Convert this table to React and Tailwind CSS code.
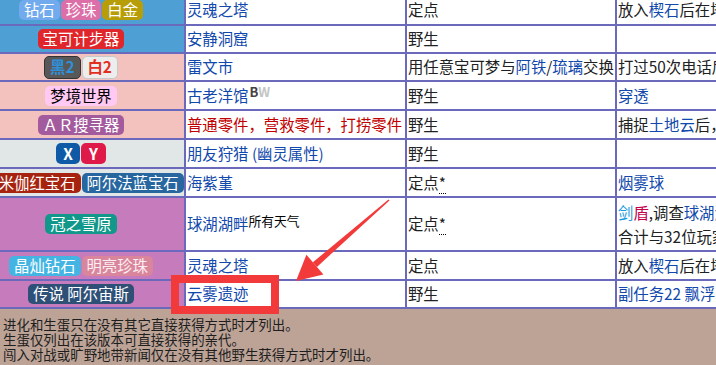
import React from 'react';

const link = 'text-[#1048ac]';

const Badge = ({ bg, text = 'text-white', className = '', children }) => (
  <span className={`inline-flex h-[20px] items-center rounded-[5px] px-[5px] leading-none ${bg} ${text} ${className}`}>
    {children}
  </span>
);

const Star = () => (
  <span className="border-b border-dotted border-black">*</span>
);

const rows = [
  {
    bg: 'bg-[#4e9fd3]',
    c1: (
      <>
        <Badge bg="bg-[#72aaee]">钻石</Badge>
        <Badge bg="bg-[#dc6ea8]">珍珠</Badge>
        <Badge bg="bg-[#b79e08]">白金</Badge>
      </>
    ),
    c2: <span className={link}>灵魂之塔</span>,
    c3: '定点',
    c4: (
      <span>放入<span className={link}>楔石</span>后在塔的顶层</span>
    ),
  },
  {
    bg: 'bg-[#4e9fd3]',
    c1: <Badge bg="bg-[#e0252b]">宝可计步器</Badge>,
    c2: <span className={link}>安静洞窟</span>,
    c3: '野生',
    c4: null,
  },
  {
    bg: 'bg-[#f3c1be]',
    c1: (
      <>
        <Badge bg="bg-[#585858]" text="text-[#2f90d8]" className="h-[23px] border border-[#333] font-bold">黑2</Badge>
        <Badge bg="bg-[#ededed]" text="text-[#e2301f]" className="h-[23px] border border-[#c8c8c8] font-bold">白2</Badge>
      </>
    ),
    c2: <span className={link}>雷文市</span>,
    c3: (
      <span>
        用任意宝可梦与<span className={link}>阿铁</span>/<span className={link}>琉璃</span>交换
      </span>
    ),
    c4: '打过50次电话后',
  },
  {
    bg: 'bg-[#f3c1be]',
    c1: <Badge bg="bg-[#ffc9f3]" text="text-black">梦境世界</Badge>,
    c2: (
      <span>
        <span className={link}>古老洋馆</span>
        <sup className="relative -top-[5px] ml-[1px] text-[13px] font-bold leading-none">
          <span className="text-[#444]">B</span>
          <span className="text-[#c4c4c4]">W</span>
        </sup>
      </span>
    ),
    c3: '野生',
    c4: <span className={link}>穿透</span>,
  },
  {
    bg: 'bg-[#f3c1be]',
    c1: <Badge bg="bg-[#a35b9d]">ＡＲ搜寻器</Badge>,
    c2: <span className="text-[#c20000]">普通零件，营救零件，打捞零件</span>,
    c3: '野生',
    c4: (
      <span>捕捉<span className={link}>土地云</span>后，</span>
    ),
  },
  {
    bg: 'bg-[#e1e6e6]',
    c1: (
      <>
        <Badge bg="bg-[#0e5aa7]" className="h-[21px] w-[24px] justify-center px-0 font-bold">X</Badge>
        <Badge bg="bg-[#e01a48]" className="h-[21px] w-[25px] justify-center px-0 font-bold">Y</Badge>
      </>
    ),
    c2: <span className={link}>朋友狩猎 (幽灵属性)</span>,
    c3: '野生',
    c4: null,
  },
  {
    bg: 'bg-[#e1e6e6]',
    c1: (
      <>
        <Badge bg="bg-[#a6240f]">欧米伽红宝石</Badge>
        <Badge bg="bg-[#27669e]">阿尔法蓝宝石</Badge>
      </>
    ),
    c2: <span className={link}>海紫堇</span>,
    c3: (
      <span>定点<Star /></span>
    ),
    c4: <span className={link}>烟雾球</span>,
  },
  {
    bg: 'bg-[#c67bbd]',
    c1: <Badge bg="bg-[#11988a]">冠之雪原</Badge>,
    c2: (
      <span>
        <span className={link}>球湖湖畔</span>
        <sup className="relative -top-[4px] text-[12.8px] leading-none text-black">所有天气</sup>
      </span>
    ),
    c3: (
      <span>定点<Star /></span>
    ),
    c4: (
      <div className="leading-[24px]">
        <div>
          <span className="text-[#1a9be0]">剑</span>
          <span className="text-[#c2004c]">盾</span>,调查<span className={link}>球湖湖畔</span>的巢穴
        </div>
        <div>合计与32位玩家对战</div>
      </div>
    ),
  },
  {
    bg: 'bg-[#c67bbd]',
    c1: (
      <>
        <Badge bg="bg-[#44b5e3]">晶灿钻石</Badge>
        <Badge bg="bg-[#d9869c]" text="text-[#fbeef2]">明亮珍珠</Badge>
      </>
    ),
    c2: <span className={link}>灵魂之塔</span>,
    c3: '定点',
    c4: (
      <span>放入<span className={link}>楔石</span>后在塔的顶层</span>
    ),
  },
  {
    bg: 'bg-[#c67bbd]',
    c1: <Badge bg="bg-[#2e4f76]">传说 阿尔宙斯</Badge>,
    c2: <span className={link}>云雾遗迹</span>,
    c3: '野生',
    c4: <span className={link}>副任务22 飘浮的神秘</span>,
  },
];

export default function App() {
  return (
    <div className="relative h-[365px] w-[716px] overflow-hidden bg-white font-['Noto_Sans_CJK_SC',sans-serif] text-[15.36px] text-[#202122]">
      {/* table */}
      <div className="-ml-[24px] -mt-[6px] grid w-max grid-cols-[206px_219px_208px_300px] grid-rows-[28px_26px_26px_27px_27px_27px_27px_52px_27px_26px] gap-[2px] bg-[#6b69bc] p-[2px]">
        {rows.map((r, i) => (
          <React.Fragment key={i}>
            <div className={`flex items-center justify-center gap-px whitespace-nowrap ${r.bg}`}>{r.c1}</div>
            <div className="flex items-center overflow-hidden whitespace-nowrap bg-white pl-[1px]">{r.c2}</div>
            <div className="flex items-center overflow-hidden whitespace-nowrap bg-white pl-[1px]">{r.c3}</div>
            <div className="flex items-center overflow-hidden whitespace-nowrap bg-white pl-[1px]">{r.c4}</div>
          </React.Fragment>
        ))}
      </div>

      {/* notes */}
      <div className="h-[56px] bg-[#bca396] pl-[3px] pt-[8px] text-[13.44px] leading-[15px] text-[#1e1e1e]">
        <div>进化和生蛋只在没有其它直接获得方式时才列出。</div>
        <div>生蛋仅列出在该版本可直接获得的亲代。</div>
        <div>闯入对战或旷野地带新闻仅在没有其他野生获得方式时才列出。</div>
      </div>

      {/* annotation */}
      <div className="absolute left-[171px] top-[275px] h-[39px] w-[108px] border-[8px] border-[#f33a3a]" />
      <svg className="absolute left-0 top-0" width="716" height="365" viewBox="0 0 716 365">
        <polygon
          points="312.9,262.3 388.5,199.4 389.5,200.6 316.9,266.9"
          fill="#f33a3a"
        />
        <polygon points="296,281 306.4,254.8 323.4,274.4" fill="#f33a3a" />
      </svg>
    </div>
  );
}
